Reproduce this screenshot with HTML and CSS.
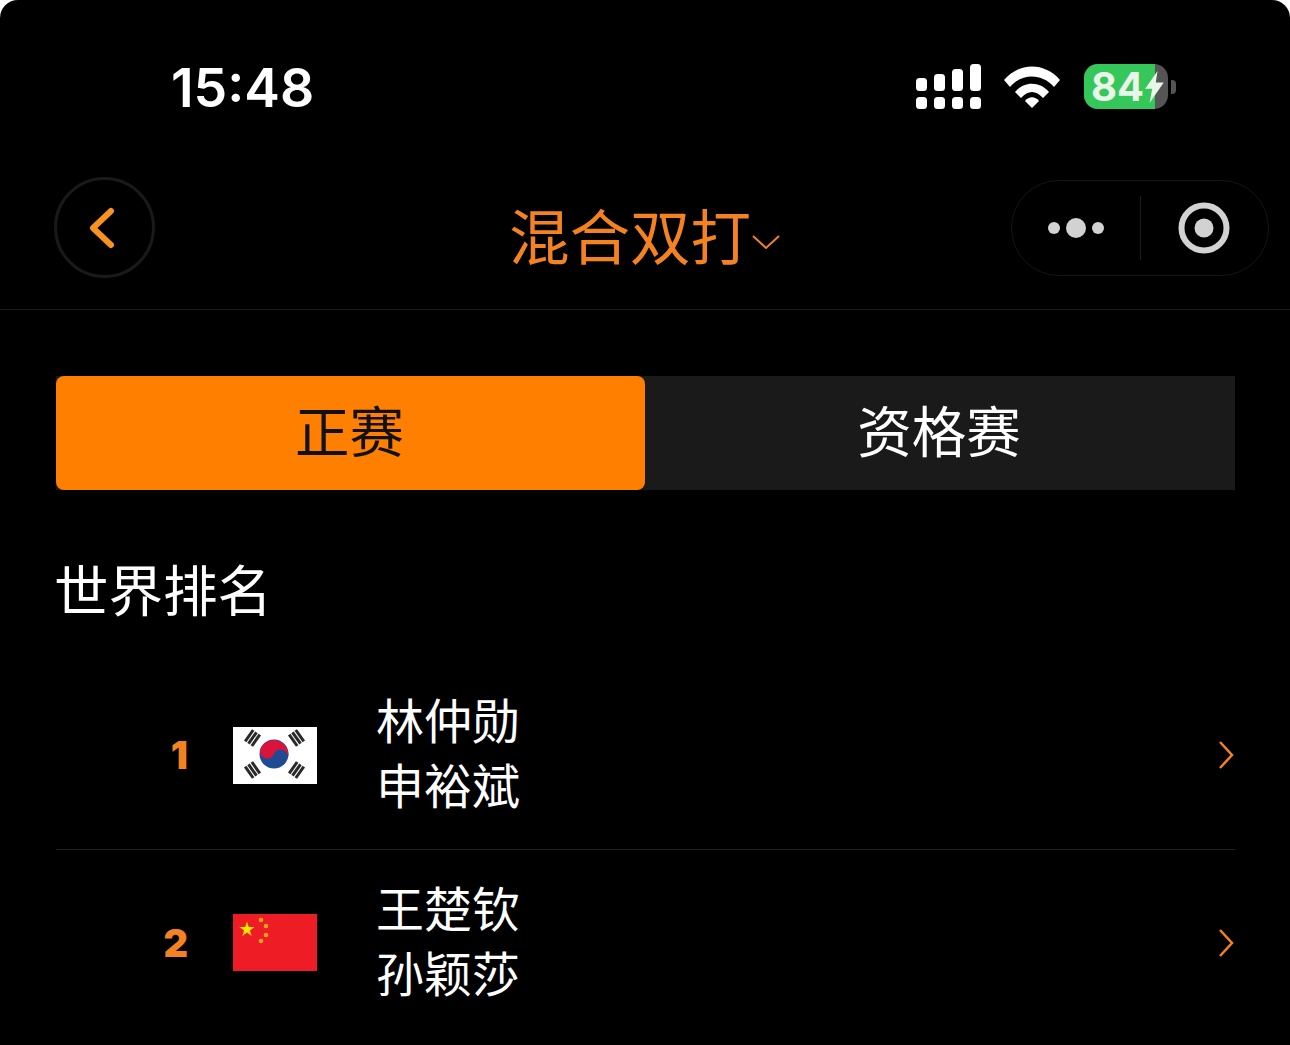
FILE: index.html
```html
<!DOCTYPE html>
<html lang="zh-CN">
<head>
    <meta charset="UTF-8">
    <meta name="viewport" content="width=device-width, initial-scale=1.0">
    <title>混合双打</title>
    <link rel="stylesheet" href="styles.css">
</head>
<body>
    <div class="screen">
        <div class="statusbar">
            <span class="time">15:48</span>
            <div class="status-icons">
                <svg class="signal" width="66" height="45" viewBox="0 0 66 45">
                    <g fill="#fff">
                        <rect x="0" y="14" width="11" height="13" rx="3.5"/>
                        <rect x="18" y="10" width="11" height="17" rx="3.5"/>
                        <rect x="36" y="5" width="11" height="22" rx="3.5"/>
                        <rect x="54" y="0" width="11" height="27" rx="3.5"/>
                        <rect x="0" y="33" width="11" height="12" rx="3.5"/>
                        <rect x="18" y="33" width="11" height="12" rx="3.5"/>
                        <rect x="36" y="33" width="11" height="12" rx="3.5"/>
                        <rect x="54" y="33" width="11" height="12" rx="3.5"/>
                    </g>
                </svg>
                <svg class="wifi" width="58" height="42" viewBox="0 0 58 42">
                    <path d="M1 14 C16 -4 42 -4 57 14 L51 21 C39 7 19 7 7 21 Z" fill="#fff"/>
                    <path d="M12 26 C21 15 37 15 46 26 L40 32 C33 24 25 24 18 32 Z" fill="#fff"/>
                    <path d="M22 35 C26 30 32 30 36 35 L29 42 Z" fill="#fff"/>
                </svg>
                <div class="battery">
                    <div class="battery-body">
                        <div class="battery-fill"></div>
                        <span class="battery-num">84</span>
                        <svg class="bolt" width="22" height="32" viewBox="0 0 24 36">
                            <path d="M16 0 L2 20 H10 L7 36 L23 13 H14 Z" fill="#e9f5ea"/>
                        </svg>
                    </div>
                    <div class="battery-cap"></div>
                </div>
            </div>
        </div>

        <div class="navbar">
            <div class="back-btn">
                <svg width="26" height="42" viewBox="0 0 26 42">
                    <path d="M22 4 L4 21 L22 38" fill="none" stroke="#f7931e" stroke-width="6" stroke-linecap="round" stroke-linejoin="round"/>
                </svg>
            </div>
            <div class="nav-title">
                <span>混合双打</span>
                <svg width="30" height="16" viewBox="0 0 30 16">
                    <path d="M2 2 L15 14 L28 2" fill="none" stroke="#f58220" stroke-width="2"/>
                </svg>
            </div>
            <div class="capsule">
                <div class="capsule-part">
                    <svg width="58" height="22" viewBox="0 0 58 22">
                        <circle cx="7" cy="11" r="6" fill="#d2d2d2"/>
                        <circle cx="29" cy="11" r="10" fill="#d2d2d2"/>
                        <circle cx="51" cy="11" r="6" fill="#d2d2d2"/>
                    </svg>
                </div>
                <div class="capsule-line"></div>
                <div class="capsule-part">
                    <svg width="52" height="52" viewBox="0 0 52 52">
                        <circle cx="26" cy="26" r="22.5" fill="none" stroke="#d2d2d2" stroke-width="6"/>
                        <circle cx="26" cy="26" r="9.5" fill="#d2d2d2"/>
                    </svg>
                </div>
            </div>
        </div>

        <div class="content">
            <div class="tabs">
                <div class="tab tab-active">正赛</div>
                <div class="tab">资格赛</div>
            </div>

            <h2 class="section-title">世界排名</h2>

            <div class="rank-row">
                <span class="rank-num">1</span>
                <svg class="flag" width="84" height="57" viewBox="0 0 84 57">
                    <rect width="84" height="57" fill="#fff"/>
                    <g stroke="#2a2a2a" stroke-width="3">
                        <path d="M12.200 14.400 L20.200 3 M15.500 16.700 L23.500 5.300 M18.800 19 L26.800 7.600"/>
                        <path d="M70.800 14.400 L62.800 3 M67.500 16.700 L59.500 5.300 M64.200 19 L56.200 7.600"/>
                        <path d="M12.200 39.600 L20.200 51 M15.500 37.300 L23.500 48.700 M18.800 35 L26.800 46.400"/>
                        <path d="M70.800 39.600 L62.800 51 M67.500 37.300 L59.500 48.700 M64.200 35 L56.200 46.400"/>
                    </g>
                    <circle cx="41" cy="27" r="14.500" fill="#1f4a94"/>
                    <path d="M27.400 22 A14.500 14.500 0 0 1 54.600 32 A7.250 7.250 0 0 0 41 27 A7.250 7.250 0 0 1 27.400 22 Z" fill="#d8143a"/>
                </svg>
                <div class="names">
                    <span>林仲勋</span>
                    <span>申裕斌</span>
                </div>
                <svg class="chevron" width="16" height="30" viewBox="0 0 16 30">
                    <path d="M2 2 L14 15 L2 28" fill="none" stroke="#f58220" stroke-width="2.500"/>
                </svg>
            </div>

            <div class="rank-row rank-row-last">
                <span class="rank-num">2</span>
                <svg class="flag" width="84" height="57" viewBox="0 0 84 57">
                    <rect width="84" height="57" fill="#ee1c25"/>
                    <polygon points="14,7.500 15.800,13 21.600,13 16.900,16.400 18.700,22 14,18.500 9.300,22 11.100,16.400 6.400,13 12.200,13" fill="#ffe500"/>
                    <circle cx="28" cy="6" r="2.300" fill="#f8a51c"/>
                    <circle cx="33" cy="12" r="2.300" fill="#f8a51c"/>
                    <circle cx="33" cy="21" r="2.300" fill="#f8a51c"/>
                    <circle cx="28" cy="27" r="2.300" fill="#f8a51c"/>
                </svg>
                <div class="names">
                    <span>王楚钦</span>
                    <span>孙颖莎</span>
                </div>
                <svg class="chevron" width="16" height="30" viewBox="0 0 16 30">
                    <path d="M2 2 L14 15 L2 28" fill="none" stroke="#f58220" stroke-width="2.500"/>
                </svg>
            </div>
        </div>
    </div>
</body>
</html>
```

FILE: styles.css
```css
html, body {
    margin: 0;
    padding: 0;
    background-color: #fff;
}
.screen {
    height: 1045px;
    overflow: hidden;
    background-color: #000;
    border-radius: 18px 18px 0 0;
    font-family: "Noto Sans CJK SC", sans-serif;
    color: #fff;
}

/* status bar */
.statusbar {
    height: 165px;
    box-sizing: border-box;
    padding: 56px 114px 0 171px;
    display: flex;
    justify-content: space-between;
    align-items: flex-start;
}
.time {
    font-family: Inter, sans-serif;
    font-size: 53.5px;
    font-weight: 600;
    line-height: 63px;
}
.status-icons {
    display: flex;
    align-items: flex-start;
    padding-top: 8px;
}
.signal {
    margin-right: 21px;
}
.wifi {
    margin-right: 23px;
    margin-top: 2px;
}
.battery {
    display: flex;
    align-items: center;
}
.battery-body {
    position: relative;
    width: 84px;
    height: 45px;
    border-radius: 14px;
    background-color: #555;
    display: flex;
    align-items: center;
}
.battery-fill {
    position: absolute;
    top: 0;
    left: 0;
    bottom: 0;
    width: 71px;
    border-radius: 14px 0 0 14px;
    background-color: #35c759;
}
.battery-num {
    position: relative;
    margin-left: 7px;
    font-family: Inter, sans-serif;
    font-size: 40px;
    font-weight: 700;
    line-height: 45px;
    color: #e9f5ea;
}
.bolt {
    position: relative;
    margin-left: -1px;
}
.battery-cap {
    width: 5px;
    height: 14px;
    margin-left: 3px;
    border-radius: 0 4px 4px 0;
    background-color: #555;
}

/* nav */
.navbar {
    height: 145px;
    box-sizing: border-box;
    border-bottom: 1px solid #1c1c1c;
    padding: 12px 21px 0 54px;
    display: flex;
    justify-content: space-between;
    align-items: flex-start;
    position: relative;
}
.back-btn {
    width: 101px;
    height: 101px;
    box-sizing: border-box;
    border: 3px solid #1a1a1a;
    border-radius: 50%;
    display: flex;
    align-items: center;
    justify-content: center;
    padding-right: 6px;
}
.nav-title {
    position: absolute;
    top: 30px;
    left: 509px;
    display: flex;
    align-items: center;
    color: #f58220;
    font-size: 60.5px;
    line-height: 78px;
}
.nav-title svg {
    margin-top: 16px;
}
.capsule {
    width: 258px;
    height: 96px;
    margin-top: 3px;
    box-sizing: border-box;
    border: 1px solid #161616;
    border-radius: 48px;
    display: flex;
    align-items: center;
}
.capsule-part {
    flex: 1;
    display: flex;
    align-items: center;
    justify-content: center;
}
.capsule-line {
    width: 1px;
    height: 64px;
    background-color: #1c1c1c;
}

/* content */
.content {
    padding: 66px 55px 0 56px;
}
.tabs {
    display: flex;
    height: 114px;
    background-color: #1a1a1a;
}
.tab {
    flex: 1;
    box-sizing: border-box;
    padding: 0 2px 9px 0;
    display: flex;
    align-items: center;
    justify-content: center;
    font-size: 54.5px;
}
.tab-active {
    flex: 0 0 589px;
    background-color: #ff8000;
    color: #111;
    border-radius: 8px;
}
.section-title {
    margin: 63px 0 38px -2px;
    font-size: 54.5px;
    font-weight: 400;
    line-height: 70px;
}
.rank-row {
    height: 189px;
    box-sizing: border-box;
    border-bottom: 1px solid #222;
    display: flex;
    align-items: center;
}
.rank-row-last {
    height: 185px;
    border-bottom: none;
}
.rank-num {
    width: 132px;
    box-sizing: border-box;
    text-align: right;
    font-family: Inter, sans-serif;
    font-size: 38px;
    font-weight: 900;
    color: #f58220;
}
.flag {
    flex-shrink: 0;
    margin-left: 45px;
}
.names {
    flex: 1;
    margin-left: 59px;
    padding-bottom: 8px;
    display: flex;
    flex-direction: column;
    font-size: 48px;
    line-height: 65px;
}
.chevron {
    flex-shrink: 0;
    margin-right: 1px;
}
```
